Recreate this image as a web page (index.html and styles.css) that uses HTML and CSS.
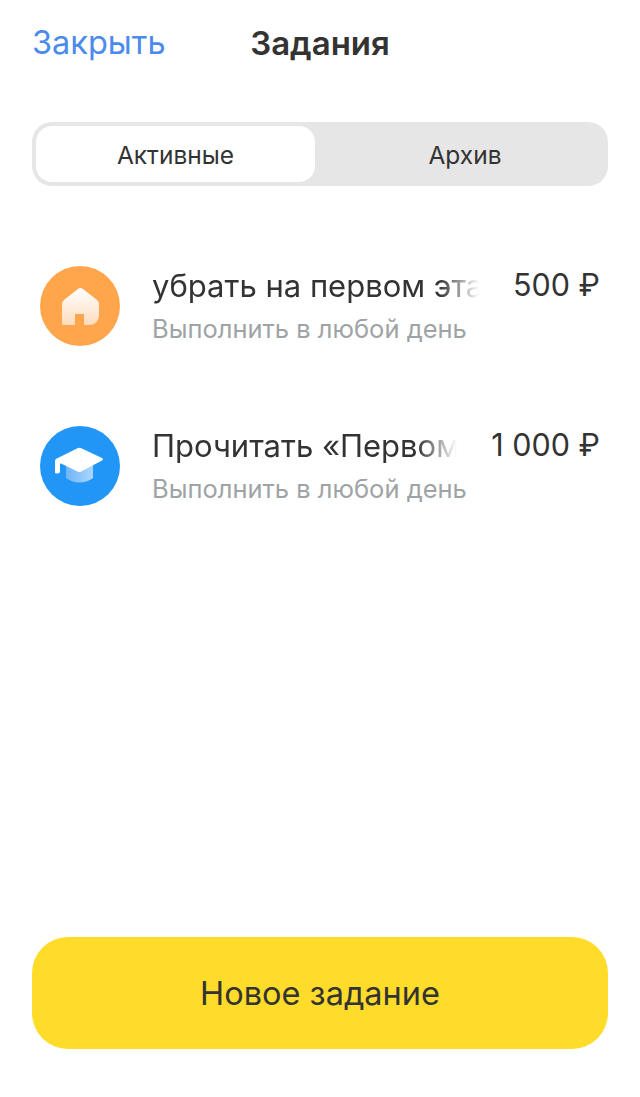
FILE: index.html
```html
<!DOCTYPE html>
<html lang="ru">
<head>
    <meta charset="UTF-8">
    <meta name="viewport" content="width=device-width, initial-scale=1.0">
    <title>Задания</title>
    <link rel="stylesheet" href="styles.css">
</head>
<body>
    <div class="page">
        <header class="topbar">
            <a class="close-link" href="#">Закрыть</a>
            <h1 class="topbar-title">Задания</h1>
        </header>

        <div class="tabs">
            <button class="tab tab-active">Активные</button>
            <button class="tab">Архив</button>
        </div>

        <div class="task-list">
            <div class="task">
                <div class="task-icon icon-orange">
                    <svg width="37" height="37" viewBox="0 0 37 37">
                        <defs>
                            <linearGradient id="houseFill" x1="0" y1="0" x2="0" y2="1">
                                <stop offset="0" stop-color="#fff"/>
                                <stop offset="1" stop-color="#fddcbc"/>
                            </linearGradient>
                        </defs>
                        <path fill="url(#houseFill)" fill-rule="evenodd" d="M16 1 C17.500 -.3 19.500 -.3 21 1 L34.500 11.500 C36.300 13 37 14.500 37 16.500 V27 C37 33 33 37 27 37 H22 V26 H13 V37 H1.500 C.5 37 0 36.500 0 35.500 V16.500 C0 14.500 .7 13 2.500 11.500 Z"/>
                    </svg>
                </div>
                <div class="task-text">
                    <div class="task-title">убрать на первом эта</div>
                    <div class="task-sub">Выполнить в любой день</div>
                </div>
                <div class="task-price">500 ₽</div>
            </div>

            <div class="task">
                <div class="task-icon icon-blue">
                    <svg width="56" height="40" viewBox="0 0 56 40">
                        <defs>
                            <linearGradient id="capFill" x1="0" y1="0" x2="1" y2="0">
                                <stop offset="0" stop-color="#6db5f8"/>
                                <stop offset="1" stop-color="#acd6fb"/>
                            </linearGradient>
                        </defs>
                        <path fill="url(#capFill)" d="M14 16 H41 V32 C37 35 32 36.500 27.500 36.500 C23 36.500 18 35 14 32 Z"/>
                        <path fill="#fff" d="M25.500 2.200 C26.800 1.500 28 1.500 29.300 2.200 L50 12 C51.300 12.700 51.300 13.700 50 14.400 L29.300 25.500 C28 26.200 26.800 26.200 25.500 25.500 L9 17.500 C8.300 17.200 8 17.600 8 18.300 V25.500 C8 26.800 7 27.500 5.500 27.500 H4 C3.300 27.500 3 27 3 26.300 V15.500 C3 14.300 3.500 13.300 4.800 12.600 Z"/>
                    </svg>
                </div>
                <div class="task-text">
                    <div class="task-title">Прочитать «Первом</div>
                    <div class="task-sub">Выполнить в любой день</div>
                </div>
                <div class="task-price">1 000 ₽</div>
            </div>
        </div>

        <button class="new-task">Новое задание</button>
    </div>
</body>
</html>
```

FILE: styles.css
```css
* {
    box-sizing: border-box;
}

body {
    margin: 0;
    background-color: #fff;
    color: #333;
    font-family: Inter, "Noto Sans", sans-serif;
}

.page {
    display: flex;
    flex-direction: column;
    height: 1097px;
    padding: 0 32px 48px;
}

.topbar {
    position: relative;
    display: flex;
    align-items: center;
    justify-content: center;
    height: 85px;
}

.close-link {
    position: absolute;
    left: 0;
    color: #4a8bec;
    font-size: 32.500px;
    text-decoration: none;
}

.topbar-title {
    margin: 0;
    font-size: 33px;
    font-weight: 600;
    color: #333;
}

.tabs {
    display: flex;
    height: 64px;
    margin-top: 37px;
    padding: 4px;
    background-color: #e6e6e6;
    border-radius: 20px;
}

.tab {
    flex: 1;
    padding: 2px 0 0 11px;
    border: none;
    border-radius: 16px;
    background: none;
    color: #333;
    font-family: inherit;
    font-size: 24.500px;
    font-weight: 400;
}

.tab-active {
    flex: 0 0 279px;
    padding-left: 0;
    background-color: #fff;
}

.task-list {
    display: flex;
    flex-direction: column;
    gap: 80px;
    margin-top: 80px;
    padding: 0 8px;
}

.task {
    display: flex;
    align-items: center;
    height: 80px;
}

.task-icon {
    display: flex;
    align-items: center;
    justify-content: center;
    flex: none;
    width: 80px;
    height: 80px;
    margin-right: 32px;
    border-radius: 50%;
}

.icon-orange {
    background-color: #ffa64d;
}

.icon-blue {
    background-color: #2196f6;
}

.task-text {
    flex: 1;
    min-width: 0;
    margin-right: 34px;
}

.task-title {
    overflow: hidden;
    white-space: nowrap;
    font-size: 31px;
    line-height: 36px;
    -webkit-mask-image: linear-gradient(to left, transparent, #000 40px);
    mask-image: linear-gradient(to left, transparent, #000 40px);
}

.task-sub {
    margin-top: 9px;
    white-space: nowrap;
    color: #9ea3a6;
    font-size: 25.500px;
    line-height: 32px;
}

.task-price {
    flex: none;
    align-self: flex-start;
    font-size: 30.500px;
    line-height: 38px;
}

.new-task {
    margin-top: auto;
    height: 112px;
    border: none;
    border-radius: 36px;
    background-color: #ffdc29;
    color: #333;
    font-family: inherit;
    font-size: 32.500px;
}
```
